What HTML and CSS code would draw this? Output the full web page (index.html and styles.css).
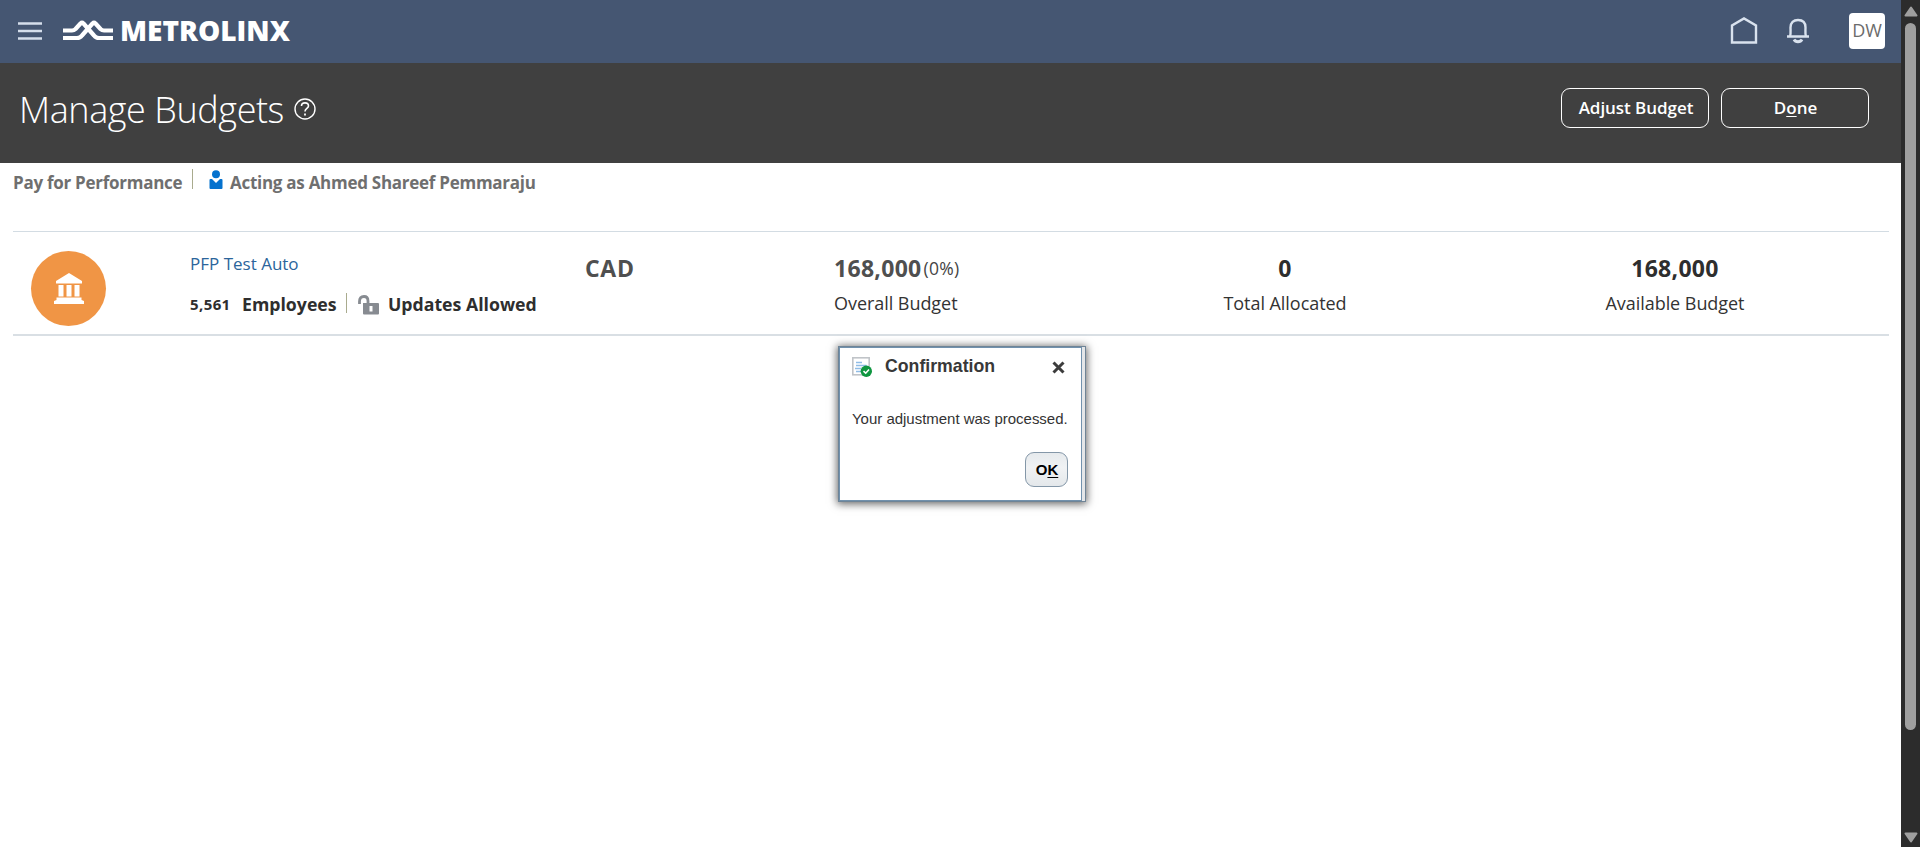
FILE: index.html
```html
<!DOCTYPE html>
<html lang="en">
<head>
<meta charset="utf-8">
<title>Manage Budgets</title>
<link rel="stylesheet" href="styles.css">
</head>
<body>
<div class="window">
  <main class="page">
    <header class="topbar">
      <svg class="menu" width="24" height="18" viewBox="0 0 24 18"><path d="M0 1.500H24M0 9H24M0 16.500H24" stroke="#d5deeb" stroke-width="2.400"/></svg>
      <svg class="logo-mark" width="50" height="22" viewBox="0 0 50 22" fill="none" stroke="#fff" stroke-width="4.200" stroke-linejoin="round"><path d="M0 11.500H9C11 11.500 11.500 11 12.500 10L17.500 4.500C18.500 3.500 19.500 3.500 20.500 4.500L31 16.500C32.500 18.500 34 19 36 19H50"/><path d="M0 19H14C16 19 17.500 18.500 19 16.500L29.500 4.500C30.500 3.500 31.500 3.500 32.500 4.500L37.500 10C38.500 11 39 11.500 41 11.500H50"/></svg>
      <span class="logo-text">METROLINX</span>
      <span class="grow"></span>
      <svg class="home" width="28" height="28" viewBox="0 0 28 28" fill="none" stroke="#d9e2ee" stroke-width="2.400"><path d="M2 25.500V8.500L14 1.500L26 8.500V25.500Z"/></svg>
      <svg class="bell" width="22" height="26" viewBox="0 0 22 26" fill="none" stroke="#d9e2ee" stroke-width="2.400"><path d="M0 18.500H22M3 18.500C4 16 3.500 13 3.500 9.500C3.500 4.500 6.500 2 11 2C15.500 2 18.500 4.500 18.500 9.500C18.500 13 18 16 19 18.500"/><path d="M7 21.500C8.500 24.500 13.500 24.500 15 21.500" stroke-width="2.800"/></svg>
      <span class="avatar">DW</span>
    </header>
    <section class="titlebar">
      <h1 class="title">Manage Budgets</h1>
      <svg class="help" width="22" height="22" viewBox="0 0 22 22" fill="none" stroke="#fff"><circle cx="11" cy="11" r="10" stroke-width="1.400"/><path d="M7.500 8C7.500 3.800 14.500 3.800 14.500 8C14.500 10.500 11 10.500 11 13.500" stroke-width="1.600"/><path d="M11 15.500V17.500" stroke-width="1.800"/></svg>
      <span class="grow"></span>
      <button class="btn adjust">Adjust Budget</button>
      <button class="btn done">D<u>o</u>ne</button>
    </section>
    <section class="context">
      <span class="plan">Pay for Performance</span>
      <i class="rule"></i>
      <svg class="person" width="14" height="20" viewBox="0 0 14 20" fill="#0572ce"><circle cx="7" cy="4.200" r="4"/><path d="M1.500 9H3L7 13L11 9H12.500Q13.500 9 13.500 10V18Q13.500 19 12.500 19H1.500Q.5 19 .5 18V10Q.5 9 1.500 9Z"/></svg>
      <span class="acting">Acting as Ahmed Shareef Pemmaraju</span>
    </section>
    <section class="summary">
      <div class="badge"><svg width="32" height="32" viewBox="0 0 32 32" fill="#fff"><path d="M16 0L29 8V10.500H3V8ZM5.500 12H10.500V23.500H5.500ZM13.500 12H18.500V23.500H13.500ZM21.500 12H26.500V23.500H21.500ZM3.500 24.500H28.500V27L31 28V31H1V28L3.500 27Z"/></svg></div>
      <div class="group">
        <a class="name">PFP Test Auto</a>
        <div class="facts">
          <span class="count">5,561</span>
          <span class="employees">Employees</span>
          <i class="rule"></i>
          <svg class="lock" width="21" height="20" viewBox="0 0 21 20"><path d="M1.500 9V6.500Q1.500 1.500 6 1.500Q10 1.500 10 6V8" fill="none" stroke="#878b91" stroke-width="2.800"/><path d="M5.500 8H20Q21 8 21 9V18.500Q21 19.500 20 19.500H6Q5 19.500 5 18.500V8Z" fill="#878b91"/><path d="M13 11V16.500" stroke="#fff" stroke-width="3"/></svg>
          <span class="updates">Updates Allowed</span>
        </div>
      </div>
      <strong class="currency">CAD</strong>
      <div class="metric left">
        <div class="value"><strong>168,000</strong><span class="pct">(0%)</span></div>
        <span class="label">Overall Budget</span>
      </div>
      <div class="metric">
        <div class="value dark"><strong>0</strong></div>
        <span class="label">Total Allocated</span>
      </div>
      <div class="metric">
        <div class="value dark"><strong>168,000</strong></div>
        <span class="label">Available Budget</span>
      </div>
    </section>
  </main>
  <aside class="scrollbar">
    <svg width="14" height="11" viewBox="0 0 14 11"><path d="M7 1.500L12.500 9.500H1.500Z" fill="#9f9f9f" stroke="#9f9f9f" stroke-width="2" stroke-linejoin="round"/></svg>
    <i class="thumb"></i>
    <svg class="down" width="14" height="11" viewBox="0 0 14 11"><path d="M7 9.500L12.500 1.500H1.500Z" fill="#9f9f9f" stroke="#9f9f9f" stroke-width="2" stroke-linejoin="round"/></svg>
  </aside>
</div>
<div class="dialog" role="dialog">
  <div class="dialog-body">
    <div class="dialog-head">
      <svg class="doc" width="20" height="20" viewBox="0 0 20 20" fill="none"><rect x=".8" y=".8" width="16.400" height="17" fill="#fff" stroke="#c0c4c8" stroke-width="1.600"/><path d="M4 5.500H10M4 8.500H14.500M3 11.500H9M4 14.500H9" stroke="#8fbce6" stroke-width="1.300"/><circle cx="14.300" cy="14.300" r="5.700" fill="#0f9640"/><path d="M11.500 14.200L13.700 16.200L17 12.500" stroke="#fff" stroke-width="1.600"/></svg>
      <span class="dtitle">Confirmation</span>
      <span class="grow"></span>
      <svg class="close" width="13" height="13" viewBox="0 0 13 13"><path d="M1.500 1.500L11.500 11.500M11.500 1.500L1.500 11.500" stroke="#3c3c3c" stroke-width="3"/></svg>
    </div>
    <p class="message">Your adjustment was processed.</p>
    <button class="ok">O<u>K</u></button>
  </div>
</div>
</body>
</html>
```
FILE: styles.css
```css
* { box-sizing: border-box; }
body { margin: 0; background: #fff; color: #333; font-family: "Open Sans", "Noto Sans", sans-serif; white-space: nowrap; overflow: hidden; }
.window { display: flex; height: 847px; }
.page { width: 1901px; }
.grow { flex: 1; }
svg { flex: none; display: block; }

.topbar { display: flex; align-items: center; height: 63px; padding: 0 16px 0 18px; background: #455672; }
.menu { margin-bottom: 1px; }
.logo-mark { margin: 0 0 4px 21px; }
.logo-text { margin: 0 0 4px 7px; color: #fff; font: 800 28px/40px "Open Sans", sans-serif; }
.home { margin: 0 29px 1px 0; }
.bell { margin: 0 40px 1px 0; }
.avatar { width: 36px; height: 36px; margin-bottom: 1px; background: #fff; border-radius: 4px; color: #6b6b6b; font-size: 18px; line-height: 34px; text-align: center; }

.titlebar { display: flex; height: 100px; padding: 25px 32px 0 19px; background: #404040; color: #fff; }
.title { width: 265px; margin: 0; font-size: 36px; font-weight: 300; line-height: 43px; letter-spacing: -.42px; }
.help { margin: 10px 0 0 10px; }
.btn { width: 148px; height: 40px; padding: 0; background: none; border: 1px solid #fff; border-radius: 9px; color: #fff; font: 600 17px/36px "Open Sans", sans-serif; }
.adjust { padding-left: 2px; letter-spacing: -.05px; }
.done { margin-left: 12px; padding-left: 1px; }
u { text-underline-offset: 2px; text-decoration-thickness: 1px; }

.context { display: flex; height: 68px; padding: 6px 0 0 13px; color: #6f6f6f; font-size: 17px; font-weight: 700; line-height: 28px; letter-spacing: -.27px; }
.plan { width: 169px; }
.rule { width: 1px; height: 20px; background: #a9ab8e; }
.context .rule { margin-left: 10px; }
.person { margin: 1px 7px 0 16px; }

.summary { display: grid; grid-template-columns: 177px 395px 249px 275px 352px 428px; width: 1876px; height: 105px; margin-left: 13px; border-top: 1px solid #d3dce3; border-bottom: 2px solid #d9dfe4; }
.badge { width: 75px; height: 75px; margin: 19px 0 0 18px; border-radius: 50%; background: #f09545; display: grid; place-items: center; }
.group { padding-top: 17px; font-size: 17px; line-height: 30px; }
.name { display: block; color: #2b659b; }
.facts { display: flex; margin-top: 10px; color: #2e2e2e; font-size: 17.700px; font-weight: 700; }
.count { width: 41px; margin-right: 11px; font-size: 15px; letter-spacing: .4px; }
.employees { width: 94px; }
.facts .rule { margin: 4px 11px 0 10px; }
.lock { margin: 6px 9px 0 0; }
.currency, .value { height: 51px; padding-top: 21px; color: #4f4f4f; font-size: 23px; line-height: 30px; letter-spacing: .3px; }
.currency { letter-spacing: .7px; }
.value.dark { color: #2e2e2e; }
.metric { text-align: center; }
.metric.left { text-align: left; }
.pct { display: inline-block; margin-left: 2px; color: #444; font-size: 17.500px; line-height: 24px; vertical-align: 2px; }
.label { display: block; margin-top: 5px; font-size: 18px; line-height: 30px; letter-spacing: -.05px; }

.dialog { position: absolute; left: 838px; top: 346px; width: 248px; height: 156px; padding-right: 3px; border: 1px solid #6f8496; background: #e4e6e8; box-shadow: 0 1px 8px 1px rgba(0,0,0,.6); font-family: "Liberation Sans", Arial, sans-serif; }
.dialog-body { height: 154px; padding: 9px 13px 0 12px; border: 1px solid #7191ad; background: #fff; }
.dialog-head { display: flex; }
.dtitle { margin: -1px 0 1px 13px; font-size: 17.700px; font-weight: 700; line-height: 20px; color: #383838; }
.close { margin: 4px 3px 0 0; }
.message { margin: 31px 0 0; font-size: 15px; line-height: 22px; letter-spacing: -.02px; }
.ok { display: block; width: 43px; height: 35px; margin: 22px 0 0 auto; padding: 0 0 0 1px; border: 1px solid #8497a8; border-radius: 9px; background: linear-gradient(#e6eaed, #f0f2f4 45%, #e4e8eb); color: #000; font: 700 15px/33px "Liberation Sans", Arial, sans-serif; }

.scrollbar { display: flex; flex-direction: column; align-items: center; width: 19px; padding: 6px 0 4px; background: #2c2c2c; }
.thumb { width: 11px; height: 707px; margin-top: 6px; border-radius: 6px; background: #9f9f9f; }
.down { margin-top: auto; }
```
